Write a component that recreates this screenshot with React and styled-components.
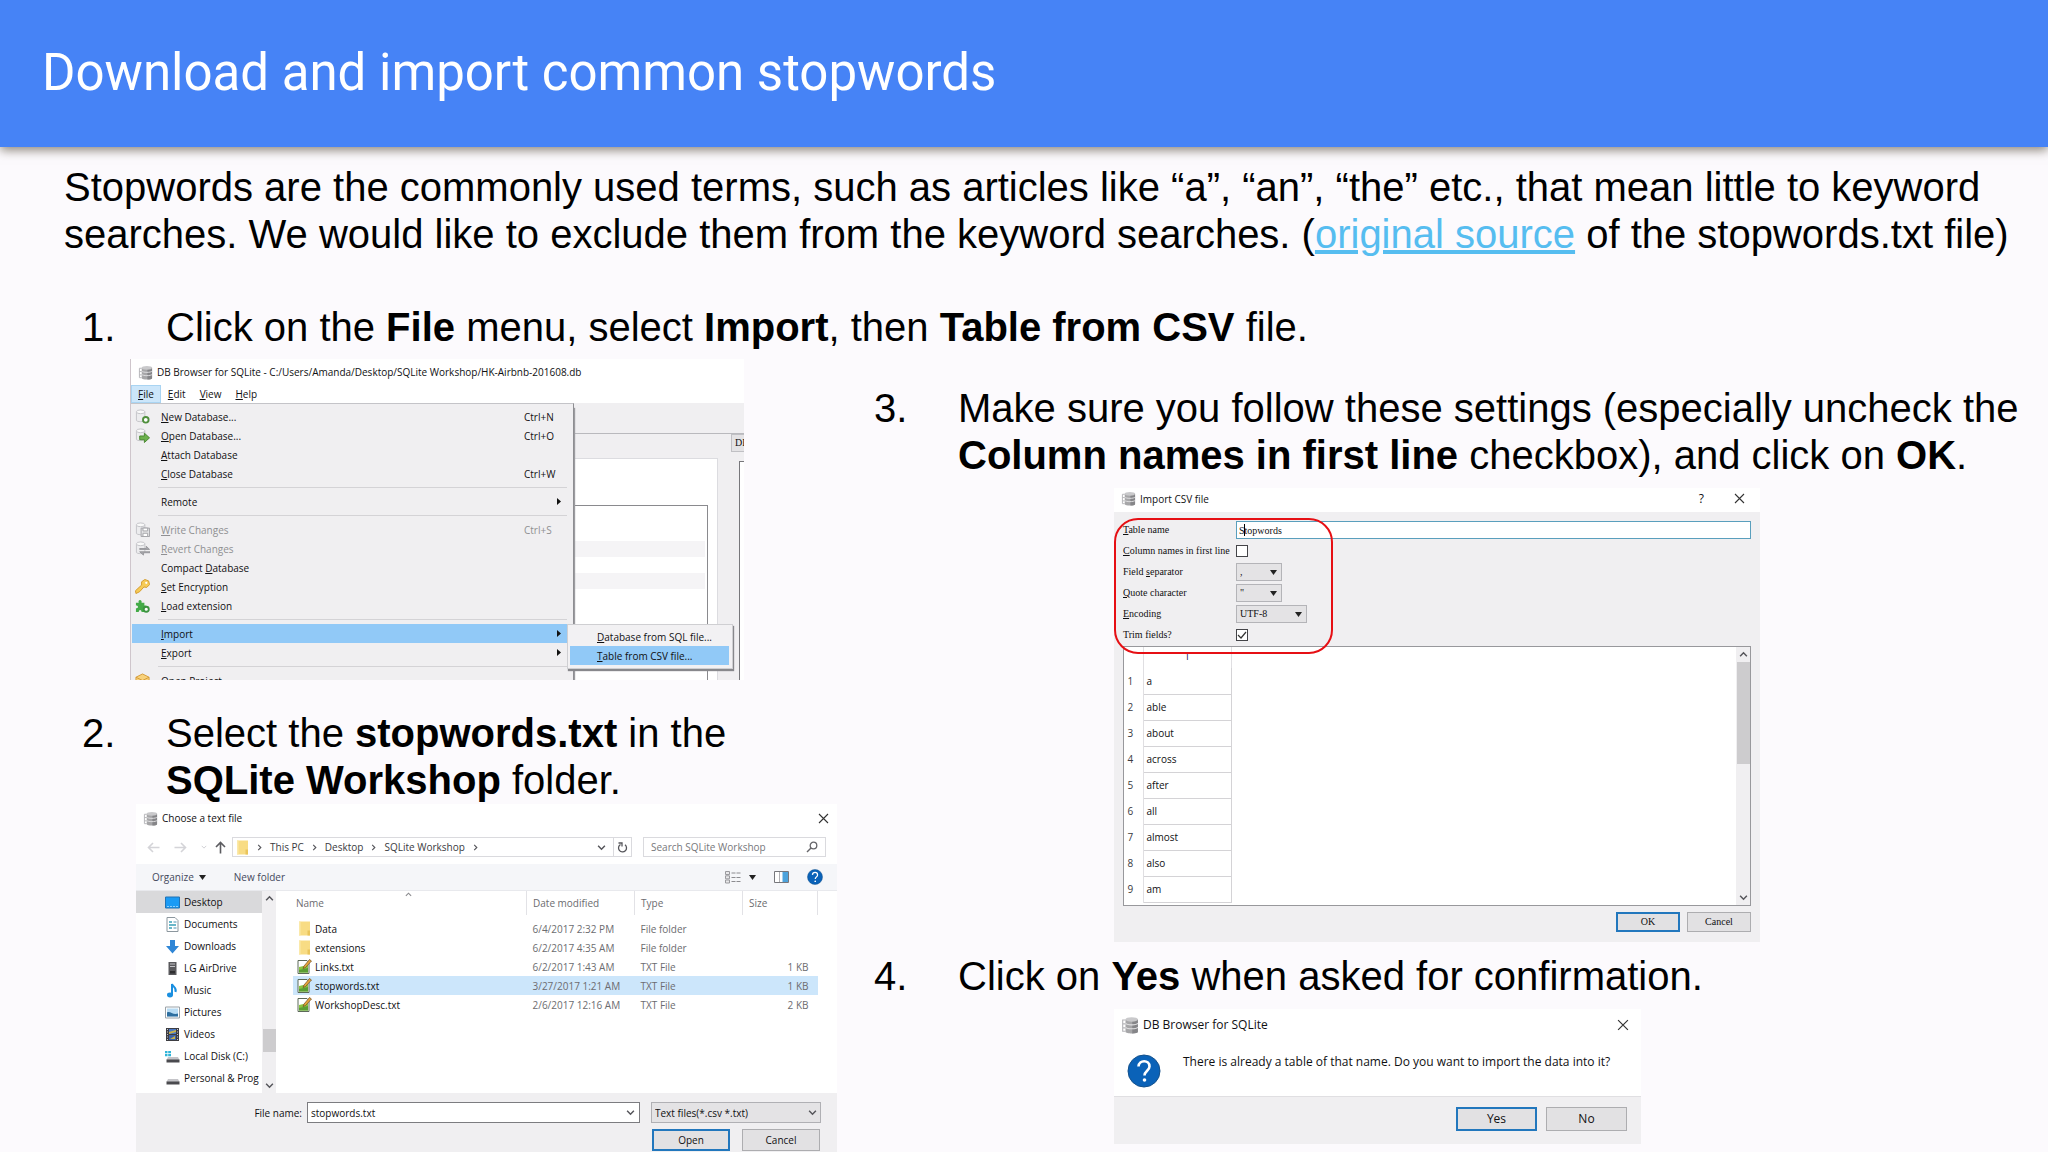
import styled, { createGlobalStyle, css } from "styled-components";

function App() {
  return (
    <>
      <GlobalStyle />
      <Slide>
        <Header>
          <h1>Download and import common stopwords</h1>
        </Header>

        <Intro>
          Stopwords are the commonly used terms, such as articles like “a”,
          “an”, “the” etc., that mean little to keyword searches. We would like
          to exclude them from the keyword searches. (
          <a href="#source">original source</a> of the stopwords.txt file)
        </Intro>

        <Steps>
          <Step number="1.">
            Click on the <b>File</b> menu, select <b>Import</b>, then{" "}
            <b>Table from CSV</b> file.
          </Step>

          <Columns>
            <LeftColumn>
              <MenuWindow />
              <Step number="2.">
                Select the <b>stopwords.txt</b> in the <b>SQLite Workshop</b>{" "}
                folder.
              </Step>
              <FileDialog />
            </LeftColumn>

            <RightColumn>
              <Step number="3.">
                Make sure you follow these settings (especially uncheck the{" "}
                <b>Column names in first line</b> checkbox), and click on{" "}
                <b>OK</b>.
              </Step>
              <ImportDialog />
              <Step number="4.">
                Click on <b>Yes</b> when asked for confirmation.
              </Step>
              <ConfirmDialog />
            </RightColumn>
          </Columns>
        </Steps>
      </Slide>
    </>
  );
}

export default App;

function Step({ number, children }) {
  return (
    <StepRow>
      <span>{number}</span>
      <p>{children}</p>
    </StepRow>
  );
}

// "&File" -> File with the F underlined
function Mnemonic({ text }) {
  const at = text.indexOf("&");
  if (at < 0) return <span>{text}</span>;
  return (
    <span>
      {text.slice(0, at)}
      <u>{text[at + 1]}</u>
      {text.slice(at + 2)}
    </span>
  );
}

/* ---------- step 1: File menu ---------- */

const menuItems = [
  { label: "&New Database...", keys: "Ctrl+N", icon: <NewDbIcon /> },
  { label: "&Open Database...", keys: "Ctrl+O", icon: <OpenDbIcon /> },
  { label: "&Attach Database" },
  { label: "&Close Database", keys: "Ctrl+W" },
  null,
  { label: "Remote", sub: true },
  null,
  {
    label: "&Write Changes",
    keys: "Ctrl+S",
    disabled: true,
    icon: <WriteIcon />,
  },
  { label: "&Revert Changes", disabled: true, icon: <RevertIcon /> },
  { label: "Compact &Database" },
  { label: "&Set Encryption", icon: <KeyIcon /> },
  { label: "&Load extension", icon: <PuzzleIcon /> },
  null,
  { label: "&Import", sub: true, active: true },
  { label: "&Export", sub: true },
  null,
  { label: "Open &Project...", icon: <BoxIcon /> },
];

function MenuWindow() {
  return (
    <MainWindow>
      <TitleBar $height={26}>
        <DbIcon />
        <span>
          DB Browser for SQLite - C:/Users/Amanda/Desktop/SQLite
          Workshop/HK-Airbnb-201608.db
        </span>
      </TitleBar>
      <MenuBar>
        {["&File", "&Edit", "&View", "&Help"].map((name, i) => (
          <MenuBarItem key={name} $open={i === 0}>
            <Mnemonic text={name} />
          </MenuBarItem>
        ))}
      </MenuBar>
      <MenuBody>
        <DropMenu>
          {menuItems.map((item, i) =>
            item ? (
              <MenuItem
                key={item.label}
                disabled={item.disabled}
                $active={item.active}
              >
                <IconSlot>{item.icon}</IconSlot>
                <Mnemonic text={item.label} />
                <span>{item.keys}</span>
                {item.sub && <RightArrow />}
              </MenuItem>
            ) : (
              <MenuLine key={i} />
            )
          )}
        </DropMenu>
        <Backdrop>
          <BackToolbar />
          <BackPanes>
            <BackLeft>
              <BackTable>
                <i />
                <i />
              </BackTable>
            </BackLeft>
            <BackRight>
              <BackTab>DB</BackTab>
              <BackPane />
            </BackRight>
          </BackPanes>
        </Backdrop>
      </MenuBody>
      <SubMenu>
        <SubItem>
          <Mnemonic text="&Database from SQL file..." />
        </SubItem>
        <SubItem $active>
          <Mnemonic text="&Table from CSV file..." />
        </SubItem>
      </SubMenu>
    </MainWindow>
  );
}

/* ---------- step 2: file dialog ---------- */

const places = [
  ["Desktop", <DesktopIcon />],
  ["Documents", <DocumentIcon />],
  ["Downloads", <DownloadIcon />],
  ["LG AirDrive", <DriveTowerIcon />],
  ["Music", <MusicIcon />],
  ["Pictures", <PictureIcon />],
  ["Videos", <VideoIcon />],
  ["Local Disk (C:)", <DiskIcon windows />],
  ["Personal & Prog", <DiskIcon />],
];

const files = [
  ["Data", "6/4/2017 2:32 PM", "File folder", ""],
  ["extensions", "6/2/2017 4:35 AM", "File folder", ""],
  ["Links.txt", "6/2/2017 1:43 AM", "TXT File", "1 KB"],
  ["stopwords.txt", "3/27/2017 1:21 AM", "TXT File", "1 KB"],
  ["WorkshopDesc.txt", "2/6/2017 12:16 AM", "TXT File", "2 KB"],
];

function FileDialog() {
  return (
    <FileWindow>
      <TitleBar $height={28} $right={4}>
        <DbIcon />
        <span>Choose a text file</span>
        <CloseButton />
      </TitleBar>

      <NavRow>
        <NavArrows>
          <ArrowIcon color="#d4d4d8" />
          <ArrowIcon color="#d4d4d8" turn={180} />
          <Chevron color="#d0d0d4" size={6} />
          <ArrowIcon color="#5c5c60" turn={90} />
        </NavArrows>
        <AddressBar>
          <FolderIcon />
          {["This PC", "Desktop", "SQLite Workshop"].map((part) => (
            <Crumb key={part}>
              <Chevron turn={-90} size={7} />
              {part}
            </Crumb>
          ))}
          <Chevron turn={-90} size={7} />
          <AddressEnd>
            <Chevron size={9} />
          </AddressEnd>
          <Refresh aria-label="Refresh">
            <RefreshIcon />
          </Refresh>
        </AddressBar>
        <SearchBox>
          <input
            aria-label="Search SQLite Workshop"
            placeholder="Search SQLite Workshop"
          />
          <SearchIcon />
        </SearchBox>
      </NavRow>

      <Toolbar>
        <ToolButton>
          Organize <DownTriangle />
        </ToolButton>
        <ToolButton>New folder</ToolButton>
        <ToolRight>
          <ViewIcon />
          <DownTriangle />
          <PaneIcon />
          <HelpIcon size={16} />
        </ToolRight>
      </Toolbar>

      <FileBody>
        <Sidebar>
          {places.map(([name, icon], i) => (
            <Place key={name} $active={i === 0}>
              {icon}
              {name}
            </Place>
          ))}
        </Sidebar>
        <ScrollTrack>
          <Chevron turn={180} size={9} />
          <ScrollThumb $height={23} $end />
          <Chevron size={9} />
        </ScrollTrack>
        <FileList>
          <FileTable>
            <colgroup>
              <col />
              <col width="108" />
              <col width="108" />
              <col width="75" />
            </colgroup>
            <thead>
              <tr>
                <th>
                  Name
                  <SortMark>
                    <Chevron turn={180} size={7} color="#8a8a8e" />
                  </SortMark>
                </th>
                <th>Date modified</th>
                <th>Type</th>
                <th>Size</th>
              </tr>
            </thead>
            <tbody>
              {files.map(([name, date, type, size]) => (
                <FileRow key={name} $active={name === "stopwords.txt"}>
                  <td>
                    <FileName>
                      {size ? <TxtIcon /> : <FolderIcon />}
                      {name}
                    </FileName>
                  </td>
                  <td>{date}</td>
                  <td>{type}</td>
                  <td>{size}</td>
                </FileRow>
              ))}
            </tbody>
          </FileTable>
        </FileList>
      </FileBody>

      <FileFooter>
        <label htmlFor="fileName">File name:</label>
        <NameField>
          <input id="fileName" defaultValue="stopwords.txt" />
          <Chevron size={9} />
        </NameField>
        <TypeSelect>
          <select aria-label="File type">
            <option>Text files(*.csv *.txt)</option>
          </select>
          <Chevron size={9} />
        </TypeSelect>
        <FileButtons>
          <PushButton $primary $height={22}>
            Open
          </PushButton>
          <PushButton $height={22}>Cancel</PushButton>
        </FileButtons>
      </FileFooter>
    </FileWindow>
  );
}

/* ---------- step 3: import dialog ---------- */

const words = [
  "a",
  "able",
  "about",
  "across",
  "after",
  "all",
  "almost",
  "also",
  "am",
];

function ImportDialog() {
  return (
    <ImportWindow>
      <TitleBar $height={24} $right={11} $lift={3}>
        <DbIcon />
        <span>Import CSV file</span>
        <QuestionButton>?</QuestionButton>
        <CloseButton />
      </TitleBar>
      <ImportBody>
        <Field>
          <label htmlFor="tableName">
            <Mnemonic text="&Table name" />
          </label>
          <TableName>
            <input id="tableName" defaultValue="Stopwords" />
            <Caret />
          </TableName>
        </Field>
        <Field>
          <label htmlFor="firstLine">
            <Mnemonic text="&Column names in first line" />
          </label>
          <CheckField id="firstLine" />
        </Field>
        <Field>
          <label htmlFor="separator">
            <Mnemonic text="Field &separator" />
          </label>
          <SmallSelect id="separator" value="," width={46} />
        </Field>
        <Field>
          <label htmlFor="quote">
            <Mnemonic text="&Quote character" />
          </label>
          <SmallSelect id="quote" value={'"'} width={46} />
        </Field>
        <Field>
          <label htmlFor="encoding">
            <Mnemonic text="&Encoding" />
          </label>
          <SmallSelect id="encoding" value="UTF-8" width={71} />
        </Field>
        <Field>
          <label htmlFor="trim">Trim fields?</label>
          <CheckField id="trim" checked />
        </Field>

        <Preview>
          <WordTable>
            <thead>
              <tr>
                <th />
                <th>1</th>
              </tr>
            </thead>
            <tbody>
              {words.map((word, i) => (
                <tr key={word}>
                  <th>{i + 1}</th>
                  <td>{word}</td>
                </tr>
              ))}
            </tbody>
          </WordTable>
          <ScrollTrack>
            <Chevron turn={180} size={9} />
            <ScrollThumb $height={102} />
            <Chevron size={9} />
          </ScrollTrack>
        </Preview>

        <ImportButtons>
          <PushButton $primary $width={64} $height={20}>
            OK
          </PushButton>
          <PushButton $width={64} $height={20}>
            Cancel
          </PushButton>
        </ImportButtons>
      </ImportBody>
      <RedMark />
    </ImportWindow>
  );
}

function CheckField({ id, checked }) {
  return (
    <CheckWrap>
      <input type="checkbox" id={id} defaultChecked={checked} />
      {checked && (
        <svg viewBox="0 0 12 12">
          <path d="M2 6l3 3 5-6" fill="none" stroke="#333" strokeWidth="1.2" />
        </svg>
      )}
    </CheckWrap>
  );
}

function SmallSelect({ id, value, width }) {
  return (
    <SelectWrap $width={width}>
      <select id={id} defaultValue={value}>
        <option>{value}</option>
      </select>
      <DownTriangle />
    </SelectWrap>
  );
}

/* ---------- step 4: confirmation ---------- */

function ConfirmDialog() {
  return (
    <ConfirmWindow>
      <TitleBar $height={32}>
        <DbIcon size={18} />
        <span>DB Browser for SQLite</span>
        <CloseButton size={12} />
      </TitleBar>
      <Message>
        <HelpIcon size={34} />
        <p>
          There is already a table of that name. Do you want to import the data
          into it?
        </p>
      </Message>
      <ConfirmButtons>
        <PushButton $primary $width={81} $height={24}>
          Yes
        </PushButton>
        <PushButton $width={81} $height={24}>
          No
        </PushButton>
      </ConfirmButtons>
    </ConfirmWindow>
  );
}

/* ---------- icons ---------- */

function CloseButton({ size = 11 }) {
  return (
    <Close aria-label="Close">
      <svg width={size} height={size} viewBox="0 0 11 11">
        <path d="M1 1l9 9M10 1l-9 9" stroke="#333" strokeWidth="1.1" />
      </svg>
    </Close>
  );
}

function DbIcon({ size = 15 }) {
  return (
    <svg width={size} height={size} viewBox="0 0 16 16">
      <path d="M4 3v11c0 2 11 2 11 0V3z" fill="#a6a6a8" />
      <path d="M10 4v11.500c3 0 5-.6 5-1.500V3z" fill="#858588" />
      <ellipse cx="9.500" cy="3" rx="5.500" ry="2" fill="#c9c9cb" />
      <path
        d="M4 6.500c1 1.800 10 1.800 11 0M4 10c1 1.800 10 1.800 11 0"
        fill="none"
        stroke="#e2e2e4"
      />
      <path
        d="M4 3.500H1.500v10H4M1.500 7H4M1.500 10.500H4"
        fill="none"
        stroke="#b4b4b8"
      />
    </svg>
  );
}

function PaleDb({ children }) {
  return (
    <svg width="15" height="15" viewBox="0 0 16 16">
      <path d="M1.500 3v9c0 2 9 2 9 0V3" fill="#ececee" stroke="#c2c2c6" />
      <ellipse cx="6" cy="3" rx="4.500" ry="2" fill="#fafafa" stroke="#c2c2c6" />
      {children}
    </svg>
  );
}

function NewDbIcon() {
  return (
    <PaleDb>
      <circle
        cx="11.500"
        cy="11.500"
        r="3"
        fill="#fff"
        stroke="#4f8f3c"
        strokeWidth="2"
      />
    </PaleDb>
  );
}

function OpenDbIcon() {
  return (
    <PaleDb>
      <path
        d="M5 8.500h5V5.500l5.500 5-5.500 5v-3H5z"
        fill="#6cb14c"
        stroke="#47862f"
      />
    </PaleDb>
  );
}

function WriteIcon() {
  return (
    <PaleDb>
      <path d="M6.500 6.500h9v9h-9z" fill="#e4e4e6" stroke="#a2a2a6" />
      <path
        d="M8.500 6.500h5v3h-5zM8.500 12h5v3.500h-5z"
        fill="#fff"
        stroke="#a2a2a6"
      />
    </PaleDb>
  );
}

function RevertIcon() {
  return (
    <PaleDb>
      <path
        d="M5 8h7V5.500L15.500 9H5zM16 12.500H9V15l-4-3.500h11z"
        fill="#a8a8ac"
        stroke="#98989c"
      />
    </PaleDb>
  );
}

function KeyIcon() {
  return (
    <svg width="15" height="15" viewBox="0 0 16 16">
      <path
        d="M7 3l3.500-2.500 4 1.500 1 4-3 3-3-.5L5 13.500l-4 2-.5-3L7 6.500z"
        fill="#f6cb57"
        stroke="#d39a2b"
      />
      <circle cx="12" cy="4" r="1.200" fill="#fff" />
    </svg>
  );
}

function PuzzleIcon() {
  return (
    <svg width="15" height="15" viewBox="0 0 16 16">
      <path
        d="M1 5h3c-1.500-4 4-4 3 0h3v3c4-1 4 4 0 3v4H7c0-3-3-3-3 0H1v-4c3 0 3-3 0-3z"
        fill="#43ab47"
      />
      <circle
        cx="12"
        cy="12"
        r="2.700"
        fill="#fff"
        stroke="#3c9440"
        strokeWidth="2"
      />
    </svg>
  );
}

function BoxIcon() {
  return (
    <svg width="15" height="15" viewBox="0 0 16 16">
      <path d="M8 1l7 3.500v7L8 15l-7-3.500v-7z" fill="#f8d27c" stroke="#d49a35" />
      <path d="M1 4.500L8 8l7-3.500M8 8v7" fill="none" stroke="#d49a35" />
    </svg>
  );
}

function RightArrow() {
  return (
    <svg width="4" height="7" viewBox="0 0 4 7">
      <path d="M0 0l4 3.500L0 7z" fill="#111" />
    </svg>
  );
}

function DownTriangle() {
  return (
    <svg width="7" height="5" viewBox="0 0 7 5">
      <path d="M0 0h7L3.500 5z" fill="#222" />
    </svg>
  );
}

function Chevron({ turn = 0, size = 8, color = "#55555a" }) {
  return (
    <svg width={size} height={size} viewBox="0 0 8 8">
      <path
        d="M1 2.500l3 3 3-3"
        transform={`rotate(${turn} 4 4)`}
        fill="none"
        stroke={color}
        strokeWidth="1.300"
      />
    </svg>
  );
}

function ArrowIcon({ color, turn = 0 }) {
  return (
    <svg width="13" height="13" viewBox="0 0 13 13">
      <path
        d="M12.500 6.500H1.500M6 2L1.500 6.500 6 11"
        transform={`rotate(${turn} 6.500 6.500)`}
        fill="none"
        stroke={color}
        strokeWidth="1.600"
      />
    </svg>
  );
}

function RefreshIcon() {
  return (
    <svg width="11" height="11" viewBox="0 0 11 11">
      <path
        d="M8 2.800A4 4 0 1 1 3.500 2.500M1.500 1h3.500v3.500"
        fill="none"
        stroke="#55555a"
        strokeWidth="1.300"
      />
    </svg>
  );
}

function SearchIcon() {
  return (
    <svg width="12" height="12" viewBox="0 0 12 12">
      <circle
        cx="7.500"
        cy="4.500"
        r="3.300"
        fill="none"
        stroke="#66666a"
        strokeWidth="1.300"
      />
      <path d="M5 7L1 11" stroke="#66666a" strokeWidth="1.500" />
    </svg>
  );
}

function FolderIcon() {
  return (
    <svg width="13" height="15" viewBox="0 0 13 15">
      <path d="M1 .5h11v14H1z" fill="#f8dc84" />
      <path d="M9.500 9.500H12v5H9.500z" fill="#eac55c" />
      <path d="M1 .5h1.500v14H1z" fill="#fbe9a9" />
    </svg>
  );
}

function TxtIcon() {
  return (
    <svg width="15" height="15" viewBox="0 0 15 15">
      <path d="M1 1.500h9l2 2v11H1z" fill="#fff" stroke="#5d6a5a" />
      <path d="M2 8l9-2v7.500H2z" fill="#8ac441" />
      <path d="M2 11l9-2v4.500H2z" fill="#5a9e33" />
      <path
        d="M6 9.500l1-2.500L12.500.5l2 1.500-6 6.500z"
        fill="#e9a63a"
        stroke="#6b4a22"
        strokeWidth=".7"
      />
    </svg>
  );
}

function ViewIcon() {
  return (
    <svg width="16" height="13" viewBox="0 0 16 13">
      <path
        d="M.5.500h4v3h-4zM.5 4.800h4v3h-4zM.5 9h4v3h-4z"
        fill="#e8e8ea"
        stroke="#9a9a9e"
      />
      <path
        d="M6.500 2h4M11.500 2h4M6.500 6.500h4M11.500 6.500h4M6.500 10.500h4M11.500 10.500h4"
        stroke="#8c8c90"
      />
    </svg>
  );
}

function PaneIcon() {
  return (
    <svg width="15" height="12" viewBox="0 0 15 12">
      <path d="M.5.500h14v11H.5z" fill="#fff" stroke="#77777c" />
      <path d="M5.500 1v10" stroke="#b0b0b4" />
      <path d="M8.500 1H14v10H8.500z" fill="#4da3dc" />
    </svg>
  );
}

function HelpIcon({ size }) {
  return (
    <svg width={size} height={size} viewBox="0 0 34 34">
      <circle cx="17" cy="17" r="16" fill="#0a62b8" stroke="#14518c" />
      <path
        d="M11.500 12.500c.5-7 11-7 11 0 0 4-5 4.500-5 9"
        fill="none"
        stroke="#fff"
        strokeWidth="2.600"
      />
      <circle cx="17.500" cy="26" r="1.800" fill="#fff" />
    </svg>
  );
}

function DesktopIcon() {
  return (
    <svg width="15" height="13" viewBox="0 0 15 13">
      <path d="M.5 1h14v11H.5z" fill="#1a9bf5" stroke="#2173b4" />
      <path d="M2 10.500h11" stroke="#8fd0fb" strokeDasharray="2 1" />
    </svg>
  );
}

function DocumentIcon() {
  return (
    <svg width="15" height="15" viewBox="0 0 15 15">
      <path d="M2 .5h8l3 3v11H2z" fill="#fff" stroke="#8c979e" />
      <path d="M4 5h3M4 8h7M4 11h3" stroke="#3aa0b8" strokeWidth="1.500" />
      <path d="M8.500 5h3M8.500 11h3" stroke="#86b7cc" strokeWidth="1.500" />
    </svg>
  );
}

function DownloadIcon() {
  return (
    <svg width="15" height="15" viewBox="0 0 15 15">
      <path d="M5 1h5v6h4l-6.500 7.500L1 7h4z" fill="#2f86d6" />
    </svg>
  );
}

function DriveTowerIcon() {
  return (
    <svg width="15" height="15" viewBox="0 0 15 15">
      <path d="M3.500 1h8v13h-8z" fill="#59595c" />
      <path d="M5 3h5M5 5.500h5" stroke="#c4c4c8" />
      <path d="M5 10h5v2.500H5z" fill="#2e2e30" />
    </svg>
  );
}

function MusicIcon() {
  return (
    <svg width="15" height="15" viewBox="0 0 15 15">
      <ellipse cx="5" cy="12" rx="3" ry="2.400" fill="#1a8fe0" />
      <path
        d="M7 12V1c1 3 5 3.500 3.500 8"
        fill="none"
        stroke="#1a8fe0"
        strokeWidth="2"
      />
    </svg>
  );
}

function PictureIcon() {
  return (
    <svg width="15" height="13" viewBox="0 0 15 13">
      <path d="M.5 1h14v11H.5z" fill="#fff" stroke="#9aa2a8" />
      <path d="M2 2.500h11v8H2z" fill="#b8dcf4" />
      <path d="M2 6.500c3-2 6 3 11 1v3H2z" fill="#2e6fa0" />
    </svg>
  );
}

function VideoIcon() {
  return (
    <svg width="15" height="15" viewBox="0 0 15 15">
      <path d="M1 1h13v13H1z" fill="#3d3d42" />
      <path d="M4 2h7v5H4z" fill="#4a78c4" />
      <path d="M4 8h7v5H4z" fill="#3b62a6" />
      <path d="M4 5l7-2v2l-7 2zM5 12l5-3v3z" fill="#c9b24c" />
      <path
        d="M2.500 2v11M12.500 2v11"
        stroke="#c8c8cc"
        strokeDasharray="1 1.500"
      />
    </svg>
  );
}

function DiskIcon({ windows }) {
  return (
    <svg width="15" height="15" viewBox="0 0 15 15">
      <path d="M3 8h10l1.500 3H1.500z" fill="#c4c4c8" />
      <path d="M1.500 10.500h13v3h-13z" fill="#4a4a4e" />
      {windows && (
        <path
          d="M0 2h2.500v2.200H0zM3.200 2H6v2.200H3.200zM0 5h2.500v2.200H0zM3.200 5H6v2.200H3.200z"
          fill="#2fb4d8"
        />
      )}
    </svg>
  );
}

/* ---------- styles: page ---------- */

const GlobalStyle = createGlobalStyle`
  * {
    box-sizing: border-box;
  }

  body {
    margin: 0;
    background-color: #fcfafd;
    color: #000;
    font-family: "Liberation Sans", Arial, sans-serif;
  }

  h1, p {
    margin: 0;
  }

  button, input, select {
    font: inherit;
    color: inherit;
    border: none;
    border-radius: 0;
    padding: 0;
    margin: 0;
    background: none;
    outline: none;
  }

  svg {
    display: block;
    flex: none;
  }
`;

const Slide = styled.main`
  min-height: 100vh;
  font-size: 40px;
  line-height: 47px;
`;

const Header = styled.header`
  display: flex;
  align-items: center;
  height: 147px;
  padding: 0 42px 2px;
  background-color: #4683f6;
  color: #fff;
  box-shadow: 0 3px 10px rgba(60, 50, 30, 0.6);

  h1 {
    font-family: Roboto, sans-serif;
    font-size: 51px;
    font-weight: 400;
    line-height: 60px;
  }
`;

const Intro = styled.p`
  padding: 17px 24px 46px 64px;

  a {
    color: #56bdf0;
    text-decoration: underline;
  }
`;

const Steps = styled.section`
  padding: 0 24px 0 82px;
`;

const StepRow = styled.div`
  display: grid;
  grid-template-columns: 84px minmax(0, 1fr);
`;

const Columns = styled.div`
  display: grid;
  grid-template-columns: minmax(0, 792fr) minmax(0, 1150fr);
`;

const LeftColumn = styled.div`
  display: flex;
  flex-direction: column;
  padding: 8px 37px 0 0;
`;

const RightColumn = styled.div`
  display: flex;
  flex-direction: column;
  padding-top: 34px;
`;

/* ---------- styles: window parts ---------- */

const AppWindow = styled.div`
  position: relative;
  width: 100%;
  background-color: #fff;
  color: #101012;
  font-family: "Open Sans", "Noto Sans", sans-serif;
  font-size: 10px;
  line-height: 16px;
`;

const MainWindow = styled(AppWindow)`
  max-width: 614px;
  height: 321px;
  margin: 0 0 30px 48px;
  border-left: 1px solid #cfc6cc;
  display: flex;
  flex-direction: column;
`;

const FileWindow = styled(AppWindow)`
  max-width: 701px;
  margin-left: 54px;
`;

const ImportWindow = styled(AppWindow)`
  max-width: 646px;
  margin: 9px 0 11px 240px;
`;

const ConfirmWindow = styled(AppWindow)`
  max-width: 527px;
  margin: 9px 0 8px 240px;
  font-size: 12px;
`;

const TitleBar = styled.div`
  display: flex;
  align-items: center;
  gap: 4px;
  flex: none;
  height: ${(props) => props.$height}px;
  padding: 0 ${(props) => props.$right || 8}px
    ${(props) => props.$lift || 0}px 7px;
  white-space: nowrap;
`;

const Close = styled.button`
  margin-left: auto;
  padding: 4px;
`;

const QuestionButton = styled.button`
  margin-left: auto;
  margin-right: 22px;
  font-size: 12px;

  & + button {
    margin-left: 0;
  }
`;

const PushButton = styled.button`
  width: ${(props) => props.$width || 78}px;
  height: ${(props) => props.$height}px;
  background-color: #e2e1e3;
  border: ${(props) =>
    props.$primary ? "2px solid #2277bd" : "1px solid #adadb0"};
`;

const ScrollTrack = styled.div`
  display: flex;
  flex-direction: column;
  align-items: center;
  justify-content: space-between;
  flex: none;
  width: 14px;
  padding: 3px 0;
  background-color: #f0eff1;
`;

const ScrollThumb = styled.div`
  width: 13px;
  height: ${(props) => props.$height}px;
  background-color: #cdccce;
  margin: ${(props) => (props.$end ? "auto 0 29px" : "3px 0 auto")};
`;

/* ---------- styles: menu ---------- */

const MenuBar = styled.div`
  display: flex;
  flex: none;
  height: 18px;
`;

const MenuBarItem = styled.button`
  padding: 0 6px;
  border: 1px solid transparent;

  ${(props) =>
    props.$open &&
    css`
      background-color: #cce6fa;
      border-color: #a9d4f2;
    `}
`;

const MenuBody = styled.div`
  display: flex;
  flex: 1;
  min-height: 0;
  overflow: hidden;
`;

const DropMenu = styled.div`
  z-index: 1;
  flex: 0 0 443px;
  padding: 3px 6px 0 1px;
  background-color: #f0eff1;
  border-top: 1px solid #c4c4c8;
  border-right: 1px solid #8e8e92;
  box-shadow: 1px 5px 1px #9c9ca0;
`;

const MenuItem = styled.button`
  display: grid;
  grid-template-columns: 29px 1fr 33px 10px;
  align-items: center;
  width: 100%;
  height: 19px;
  text-align: left;
  color: ${(props) => (props.disabled ? "#8f8f92" : "#101012")};
  background-color: ${(props) => (props.$active ? "#91c9f7" : "transparent")};

  span:nth-child(3) {
    white-space: nowrap;
  }
`;

const IconSlot = styled.i`
  padding-left: 3px;
`;

const MenuLine = styled.hr`
  height: 1px;
  margin: 4px 0 4px 26px;
  border: none;
  background-color: #d4d3d6;
`;

const SubMenu = styled.div`
  position: absolute;
  z-index: 2;
  left: 436px;
  top: 265px;
  width: 166px;
  padding: 2px 3px 3px 2px;
  background-color: #f2f1f3;
  border: 1px solid #cfcfd2;
  box-shadow: 1px 2px 1px #88888c;
`;

const SubItem = styled.button`
  display: block;
  width: 100%;
  height: 19px;
  padding-left: 27px;
  text-align: left;
  white-space: nowrap;
  background-color: ${(props) => (props.$active ? "#91c9f7" : "transparent")};
`;

const Backdrop = styled.div`
  display: flex;
  flex-direction: column;
  flex: 1;
  min-width: 0;
  background-color: #f0eff1;
`;

const BackToolbar = styled.div`
  flex: none;
  height: 31px;
  border-bottom: 1px solid #b9b9bd;
`;

const BackPanes = styled.div`
  display: flex;
  justify-content: space-between;
  flex: 1;
`;

const BackLeft = styled.div`
  flex: 0 0 144px;
  margin-top: 24px;
  padding: 46px 9px 0 0;
  background-color: #fff;
  border-top: 1px solid #dcdce0;
  border-right: 1px solid #dcdce0;
`;

const BackTable = styled.div`
  height: 100%;
  padding: 35px 2px 0 0;
  border-top: 1px solid #8a8a8e;
  border-right: 1px solid #8a8a8e;

  i {
    display: block;
    height: 16px;
    margin-bottom: 16px;
    background-color: #f5f4f6;
  }
`;

const BackRight = styled.div`
  display: flex;
  flex-direction: column;
  width: 13px;
  overflow: hidden;
`;

const BackTab = styled.span`
  flex: none;
  height: 18px;
  padding-left: 3px;
  background-color: #e4e3e5;
  border: 1px solid #c0c0c4;
  border-right: none;
  font-family: "Liberation Serif", serif;
`;

const BackPane = styled.div`
  flex: 1;
  margin: 9px 0 0 8px;
  background-color: #fff;
  border-top: 1px solid #77777b;
  border-left: 1px solid #77777b;
`;

/* ---------- styles: file dialog ---------- */

const NavRow = styled.div`
  display: flex;
  align-items: center;
  height: 32px;
  padding: 0 11px 2px;
  color: #3a3a3e;
`;

const NavArrows = styled.div`
  display: flex;
  align-items: center;
  gap: 14px;
  flex: none;
  width: 85px;

  svg:nth-child(3) {
    margin: 0 -7px 0 0;
  }
`;

const AddressBar = styled.div`
  display: flex;
  align-items: center;
  gap: 7px;
  flex: 1;
  height: 20px;
  padding-left: 3px;
  border: 1px solid #dadade;
  white-space: nowrap;
`;

const Crumb = styled.span`
  display: flex;
  align-items: center;
  gap: 7px;
`;

const AddressEnd = styled.span`
  margin-left: auto;
`;

const Refresh = styled.button`
  align-self: stretch;
  padding: 0 3px;
  border-left: 1px solid #dadade;
`;

const SearchBox = styled.div`
  display: flex;
  align-items: center;
  flex: 0 0 183px;
  height: 20px;
  margin-left: 11px;
  padding: 0 7px;
  border: 1px solid #dadade;

  input {
    flex: 1;
    min-width: 0;
  }

  input::placeholder {
    color: #77777b;
    opacity: 1;
  }
`;

const Toolbar = styled.div`
  display: flex;
  align-items: center;
  gap: 28px;
  height: 27px;
  padding: 0 14px 0 16px;
  background-color: #f5f6f9;
  border-bottom: 1px solid #e8e9ed;
  color: #44485c;
`;

const ToolButton = styled.button`
  display: flex;
  align-items: center;
  gap: 5px;
`;

const ToolRight = styled.div`
  display: flex;
  align-items: center;
  gap: 18px;
  margin-left: auto;

  svg:first-child {
    margin-right: -10px;
  }
`;

const FileBody = styled.div`
  display: flex;
  height: 202px;
`;

const Sidebar = styled.nav`
  flex: 0 0 126px;
  overflow: hidden;
`;

const Place = styled.button`
  display: flex;
  align-items: center;
  gap: 4px;
  width: 100%;
  height: 22px;
  padding-left: 29px;
  white-space: nowrap;
  background-color: ${(props) => (props.$active ? "#d9d9db" : "transparent")};
`;

const FileList = styled.div`
  flex: 1;
  min-width: 0;
  padding: 0 19px 0 17px;
`;

const FileTable = styled.table`
  width: 100%;
  table-layout: fixed;
  border-collapse: collapse;
  color: #6c6c70;
  white-space: nowrap;

  th {
    position: relative;
    height: 24px;
    padding: 0 0 0 6px;
    border-right: 1px solid #e2e2e6;
    font-weight: 400;
    text-align: left;
  }

  th:first-child {
    padding-left: 3px;
  }

  thead::after {
    content: "";
    display: block;
    height: 4px;
  }

  td {
    height: 19px;
    padding: 0 0 0 6px;
  }

  td:first-child {
    padding-left: 4px;
    color: #101012;
  }

  td:last-child {
    padding-right: 9px;
    text-align: right;
  }
`;

const SortMark = styled.span`
  position: absolute;
  top: 0;
  left: 112px;
`;

const FileRow = styled.tr`
  background-color: ${(props) => (props.$active ? "#cce6fb" : "transparent")};
`;

const FileName = styled.span`
  display: flex;
  align-items: center;
  gap: 3px;

  svg {
    width: 15px;
  }
`;

const FileFooter = styled.div`
  display: grid;
  grid-template-columns: 1fr 333px 170px;
  column-gap: 11px;
  row-gap: 6px;
  align-items: center;
  padding: 9px 16px 1px 0;
  background-color: #f0eff1;

  label {
    margin-right: -6px;
    text-align: right;
  }
`;

const NameField = styled.div`
  display: flex;
  align-items: center;
  height: 21px;
  padding: 0 4px 0 3px;
  background-color: #fff;
  border: 1px solid #7c7c80;

  input {
    flex: 1;
    min-width: 0;
  }
`;

const TypeSelect = styled.div`
  display: grid;
  align-items: center;
  height: 21px;
  background-color: #e4e3e5;
  border: 1px solid #b0b0b4;

  select,
  svg {
    grid-area: 1 / 1;
  }

  select {
    appearance: none;
    padding-left: 3px;
  }

  svg {
    justify-self: end;
    margin-right: 3px;
    pointer-events: none;
  }
`;

const FileButtons = styled.div`
  grid-column: 3;
  display: flex;
  gap: 12px;
  padding-left: 1px;
`;

/* ---------- styles: import dialog ---------- */

const ImportBody = styled.div`
  padding: 9px 9px 10px;
  background-color: #f0eff1;
  font-family: "Liberation Serif", serif;
`;

const Field = styled.div`
  display: grid;
  grid-template-columns: 113px minmax(0, 1fr);
  align-items: center;
  height: 18px;
  margin-bottom: 3px;
  white-space: nowrap;
`;

const TableName = styled.div`
  position: relative;

  input {
    display: block;
    width: 100%;
    height: 18px;
    padding-left: 2px;
    background-color: #fff;
    border: 1px solid #5a9fbd;
  }
`;

const Caret = styled.i`
  position: absolute;
  left: 8px;
  top: 3px;
  width: 1px;
  height: 12px;
  background-color: #000;
`;

const CheckWrap = styled.span`
  display: grid;
  width: 12px;
  height: 12px;

  input,
  svg {
    grid-area: 1 / 1;
    width: 12px;
    height: 12px;
  }

  input {
    appearance: none;
    background-color: #fff;
    border: 1px solid #444448;
  }

  svg {
    pointer-events: none;
  }
`;

const SelectWrap = styled.span`
  display: grid;
  align-items: center;
  width: ${(props) => props.$width}px;
  height: 18px;
  background-color: #e4e3e5;
  border: 1px solid #b4b4b8;

  select,
  svg {
    grid-area: 1 / 1;
  }

  select {
    appearance: none;
    padding-left: 3px;
  }

  svg {
    justify-self: end;
    margin-right: 4px;
    pointer-events: none;
  }
`;

const Preview = styled.div`
  display: flex;
  justify-content: space-between;
  height: 260px;
  margin-top: -1px;
  overflow: hidden;
  background-color: #fff;
  border: 1px solid #98989c;
`;

const WordTable = styled.table`
  align-self: flex-start;
  border-collapse: collapse;
  font-family: "Open Sans", "Noto Sans", sans-serif;

  th {
    width: 19px;
    padding: 0;
    border-right: 1px solid #e0dfe2;
    font-weight: 400;
  }

  thead th {
    height: 21px;
    padding-bottom: 3px;
    color: #23235a;
  }

  tbody th {
    padding-right: 6px;
    color: #3a3a3e;
  }

  td {
    width: 88px;
    height: 26px;
    padding: 0 0 0 3px;
    border-right: 1px solid #d4d3d6;
    border-bottom: 1px solid #d4d3d6;
  }
`;

const ImportButtons = styled.div`
  display: flex;
  justify-content: flex-end;
  gap: 7px;
  margin-top: 6px;
`;

const RedMark = styled.div`
  position: absolute;
  left: 0;
  top: 30px;
  width: 219px;
  height: 136px;
  border: 2px solid #e60f14;
  border-radius: 24px;
  pointer-events: none;
`;

/* ---------- styles: confirm dialog ---------- */

const Message = styled.div`
  display: flex;
  gap: 22px;
  height: 55px;
  padding: 13px 0 0 13px;
  white-space: nowrap;
`;

const ConfirmButtons = styled.div`
  display: flex;
  justify-content: flex-end;
  gap: 9px;
  padding: 10px 14px 13px;
  background-color: #f0eff1;
  border-top: 1px solid #e0dfe2;
`;
